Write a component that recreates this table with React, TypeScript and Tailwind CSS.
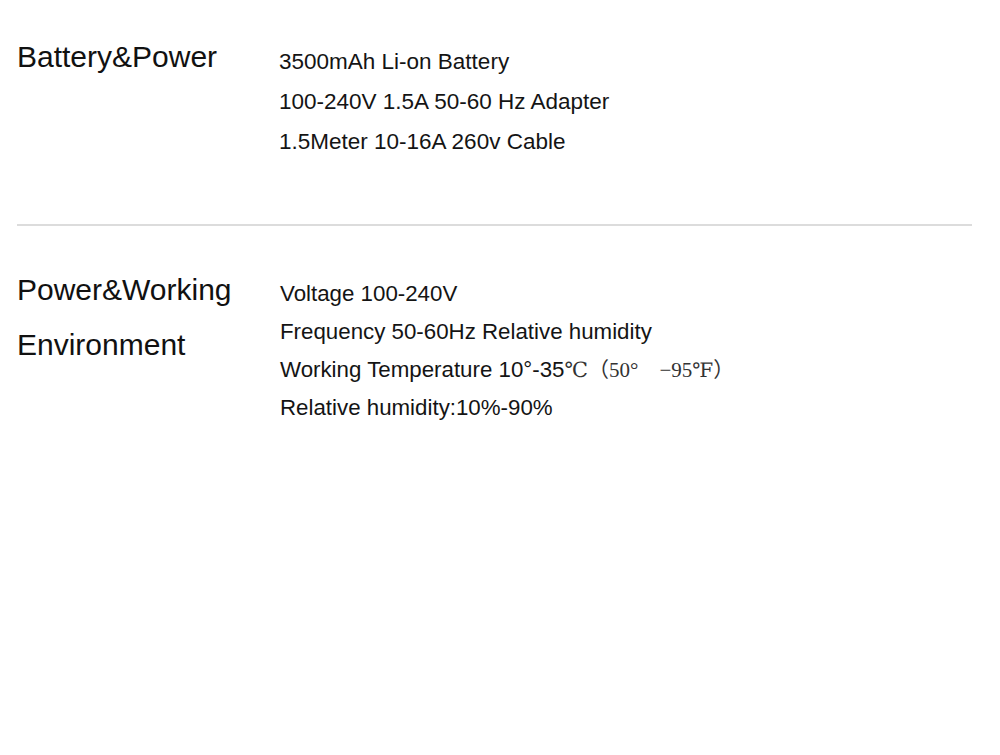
export default function App() {
  const battery = ["3500mAh Li-on Battery", "100-240V 1.5A 50-60 Hz Adapter", "1.5Meter 10-16A 260v Cable"]

  return (
    <div className="w-[1000px] h-[755px] bg-white text-[#141414] font-['Liberation_Sans',Arial,sans-serif]">
      {/* Battery & power */}
      <div className="flex pl-[17px] pt-[42px]">
        <div className="w-[262px] text-[30px] leading-[30px] text-[#111]">Battery&amp;Power</div>
        <div className="text-[22.5px] leading-[40px]">
          {battery.map((line) => (
            <div key={line}>{line}</div>
          ))}
        </div>
      </div>

      <div className="ml-[17px] mr-[28px] mt-[62px] h-[2px] bg-[#dcdcdc]" />

      {/* Power & working environment */}
      <div className="flex pl-[17px] pt-[36px]">
        <div className="w-[262px] text-[30px] leading-[55px] text-[#111]">
          <div>Power&amp;Working</div>
          <div>Environment</div>
        </div>
        <div className="pt-[13px] pl-[1px] text-[22.3px] leading-[38px]">
          <div>Voltage 100-240V</div>
          <div>Frequency 50-60Hz Relative humidity</div>
          <div>
            Working Temperature 10°-35
            <span className="font-['DejaVu_Serif','Liberation_Serif','Noto_Sans_CJK_SC',serif] text-[21px] text-[#333]">℃</span>
            <span className="font-['Liberation_Serif','Noto_Sans_CJK_SC',serif] text-[21px] text-[#333]">
              （50°　−95
            </span>
            <span className="font-['DejaVu_Serif','Liberation_Serif','Noto_Sans_CJK_SC',serif] text-[20px] text-[#333]">℉</span>
            <span className="font-['Liberation_Serif','Noto_Sans_CJK_SC',serif] text-[21px] text-[#333]">）</span>
          </div>
          <div>Relative humidity:10%-90%</div>
        </div>
      </div>
    </div>
  )
}
